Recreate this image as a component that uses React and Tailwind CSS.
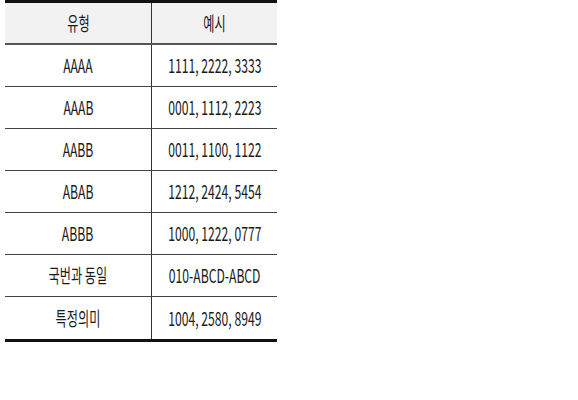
const rows = [
  ["AAAA", "1111, 2222, 3333"],
  ["AAAB", "0001, 1112, 2223"],
  ["AABB", "0011, 1100, 1122"],
  ["ABAB", "1212, 2424, 5454"],
  ["ABBB", "1000, 1222, 0777"],
  ["국번과 동일", "010-ABCD-ABCD"],
  ["특정의미", "1004, 2580, 8949"],
];

const font = {
  fontFamily: '"Noto Sans CJK KR", "Noto Sans", sans-serif',
};

// narrow, tall glyphs like the original (Malgun Gothic look)
const Txt = ({ children }) => (
  <span className="inline-block whitespace-nowrap scale-x-[0.64]">{children}</span>
);

export default function App() {
  return (
    <div className="w-[578px] h-[400px] bg-white pl-[5px]" style={font}>
      <div className="w-[272px] border-t-[3px] border-b-[3px] border-[#111]">
        <div className="grid grid-cols-[147px_125px] h-[42px] bg-[#f2f2f2] border-b-[2px] border-[#555] text-[19px] text-[#1a1a1a]">
          <div className="flex items-center justify-center border-r border-[#333]">
            <Txt>유형</Txt>
          </div>
          <div className="flex items-center justify-center">
            <Txt>예시</Txt>
          </div>
        </div>
        {rows.map(([type, ex], i) => (
          <div
            key={type}
            className={
              "grid grid-cols-[147px_125px] h-[42px] text-[19px] text-[#1a1a1a] " +
              (i < rows.length - 1 ? "border-b border-[#444]" : "")
            }
          >
            <div className="flex items-center justify-center border-r border-[#333]">
              <Txt>{type}</Txt>
            </div>
            <div className="flex items-center justify-center">
              <Txt>{ex}</Txt>
            </div>
          </div>
        ))}
      </div>
    </div>
  );
}
